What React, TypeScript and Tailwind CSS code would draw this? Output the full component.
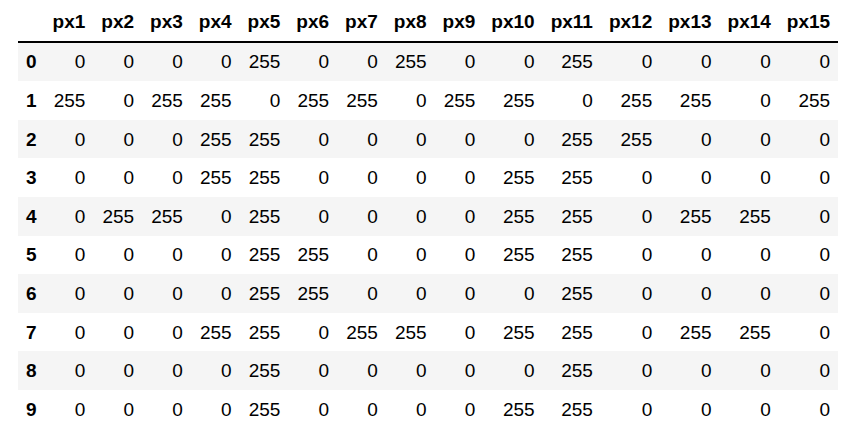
const rows: number[][] = [
  [0, 0, 0, 0, 255, 0, 0, 255, 0, 0, 255, 0, 0, 0, 0],
  [255, 0, 255, 255, 0, 255, 255, 0, 255, 255, 0, 255, 255, 0, 255],
  [0, 0, 0, 255, 255, 0, 0, 0, 0, 0, 255, 255, 0, 0, 0],
  [0, 0, 0, 255, 255, 0, 0, 0, 0, 255, 255, 0, 0, 0, 0],
  [0, 255, 255, 0, 255, 0, 0, 0, 0, 255, 255, 0, 255, 255, 0],
  [0, 0, 0, 0, 255, 255, 0, 0, 0, 255, 255, 0, 0, 0, 0],
  [0, 0, 0, 0, 255, 255, 0, 0, 0, 0, 255, 0, 0, 0, 0],
  [0, 0, 0, 255, 255, 0, 255, 255, 0, 255, 255, 0, 255, 255, 0],
  [0, 0, 0, 0, 255, 0, 0, 0, 0, 0, 255, 0, 0, 0, 0],
  [0, 0, 0, 0, 255, 0, 0, 0, 0, 255, 255, 0, 0, 0, 0],
]

const columns = Array.from({ length: 15 }, (_, i) => `px${i + 1}`)

export default function App() {
  return (
    <div className="w-[855px] h-[446px] bg-white overflow-hidden font-['Liberation_Sans',Arial,sans-serif] text-[19px] leading-[19px] text-black">
      <table className="ml-[18px] mt-[2px] border-collapse">
        <thead>
          <tr className="border-b-2 border-black">
            <th className="px-2 py-[9.8px]"></th>
            {columns.map((c) => (
              <th key={c} className="px-2 py-[9.8px] text-right font-bold">
                {c}
              </th>
            ))}
          </tr>
        </thead>
        <tbody>
          {rows.map((row, i) => (
            <tr key={i} className={i % 2 === 0 ? 'bg-[#f5f5f5]' : 'bg-white'}>
              <th className="px-2 py-[9.8px] text-left font-bold">{i}</th>
              {row.map((v, j) => (
                <td key={j} className="px-2 py-[9.8px] text-right">
                  {v}
                </td>
              ))}
            </tr>
          ))}
        </tbody>
      </table>
    </div>
  )
}
